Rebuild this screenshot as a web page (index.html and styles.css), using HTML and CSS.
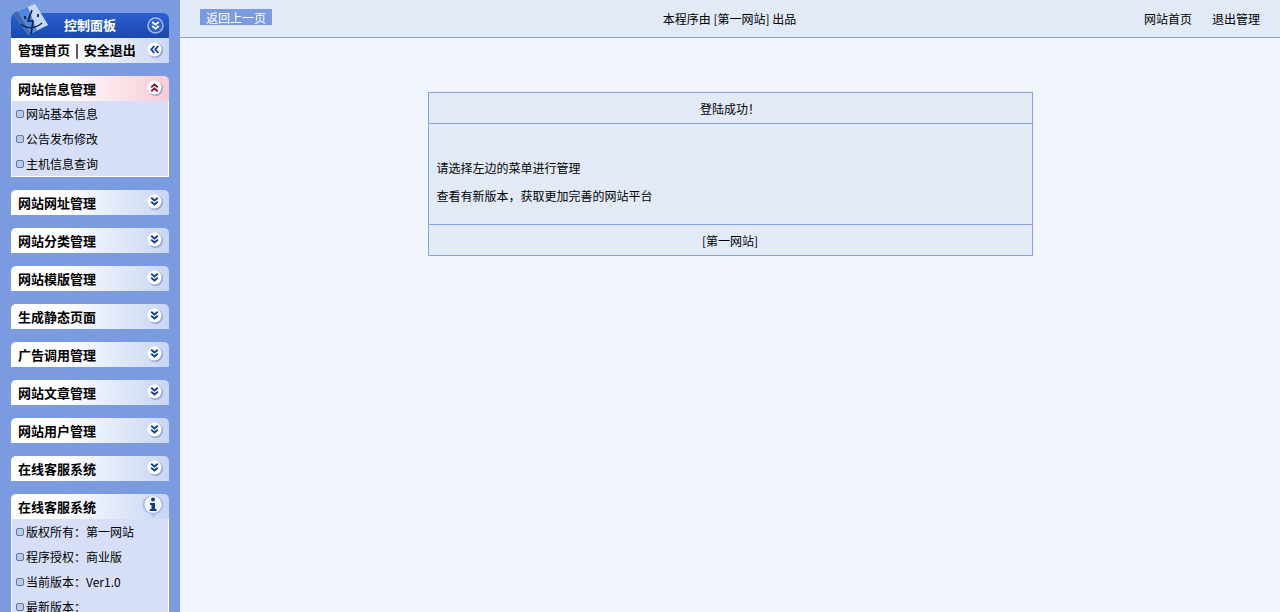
FILE: index.html
```html
<!DOCTYPE html>
<html lang="zh-CN">
<head>
<meta charset="utf-8">
<title>管理中心</title>
<link rel="stylesheet" href="styles.css">
</head>
<body>
<svg class="defs" width="0" height="0" aria-hidden="true">
  <defs>
    <g id="btn"><circle cx="9.500" cy="9.500" r="7.500" fill="#7f95cc" opacity=".75"/><circle cx="8.500" cy="8.500" r="7" fill="#fff"/></g>
    <g id="down"><use href="#btn"/><path d="M5.200 4.800 8.500 7.500 11.800 4.800M5.200 8.800 8.500 11.500 11.800 8.800" fill="none" stroke="#123f92" stroke-width="1.900"/></g>
  </defs>
</svg>
<div class="app">
  <aside class="side">
    <div class="title">
      <svg class="logo" width="38" height="36" viewBox="0 0 38 36" aria-hidden="true">
        <path d="M2 11 24 2 37 23 17 33Z" fill="#a9c2ee"/>
        <path d="M2 11 7 9 20 32 17 33Z" fill="#3f68b4"/>
        <path d="M7 9 17 5 26 28 20 32Z" fill="#4f86dc"/>
        <path d="M17 5 24 2 37 23 26 28Z" fill="#c6d8f6"/>
        <path d="M21 8 17 19H22L20 32" fill="none" stroke="#10204a" stroke-width="1.600"/>
        <path d="M14 14V17M27 12V15" fill="none" stroke="#10204a" stroke-width="1.800"/>
        <path d="M10 22C15 27 24 27 31 21" fill="none" stroke="#10204a" stroke-width="1.200"/>
      </svg>
      <span class="title-text">控制面板</span>
      <svg class="ico" width="19" height="19" viewBox="0 0 19 19" aria-hidden="true"><circle cx="9.500" cy="9.500" r="7.500" fill="#2f62cc" stroke="#a3bbec" stroke-width="1.500"/><path d="M6.200 6 9.500 8.700 12.800 6M6.200 10 9.500 12.700 12.800 10" fill="none" stroke="#fff" stroke-width="1.800"/></svg>
    </div>
    <div class="quick">
      <span class="quick-text">管理首页 | 安全退出</span>
      <svg class="ico" width="19" height="19" viewBox="0 0 19 19" aria-hidden="true"><use href="#btn"/><path d="M8.300 5 5.300 8.500 8.300 12M12.300 5 9.300 8.500 12.300 12" fill="none" stroke="#123f92" stroke-width="1.900"/></svg>
    </div>

    <section class="group">
      <div class="head head-open"><span>网站信息管理</span>
        <svg class="ico" width="19" height="19" viewBox="0 0 19 19" aria-hidden="true"><use href="#btn"/><path d="M5.200 8.200 8.500 5.500 11.800 8.200M5.200 12.200 8.500 9.500 11.800 12.200" fill="none" stroke="#8a1040" stroke-width="1.900"/></svg>
      </div>
      <ul class="list">
        <li>网站基本信息</li>
        <li>公告发布修改</li>
        <li>主机信息查询</li>
      </ul>
    </section>

    <section class="group"><div class="head"><span>网站网址管理</span><svg class="ico" width="19" height="19" viewBox="0 0 19 19" aria-hidden="true"><use href="#down"/></svg></div></section>
    <section class="group"><div class="head"><span>网站分类管理</span><svg class="ico" width="19" height="19" viewBox="0 0 19 19" aria-hidden="true"><use href="#down"/></svg></div></section>
    <section class="group"><div class="head"><span>网站模版管理</span><svg class="ico" width="19" height="19" viewBox="0 0 19 19" aria-hidden="true"><use href="#down"/></svg></div></section>
    <section class="group"><div class="head"><span>生成静态页面</span><svg class="ico" width="19" height="19" viewBox="0 0 19 19" aria-hidden="true"><use href="#down"/></svg></div></section>
    <section class="group"><div class="head"><span>广告调用管理</span><svg class="ico" width="19" height="19" viewBox="0 0 19 19" aria-hidden="true"><use href="#down"/></svg></div></section>
    <section class="group"><div class="head"><span>网站文章管理</span><svg class="ico" width="19" height="19" viewBox="0 0 19 19" aria-hidden="true"><use href="#down"/></svg></div></section>
    <section class="group"><div class="head"><span>网站用户管理</span><svg class="ico" width="19" height="19" viewBox="0 0 19 19" aria-hidden="true"><use href="#down"/></svg></div></section>
    <section class="group"><div class="head"><span>在线客服系统</span><svg class="ico" width="19" height="19" viewBox="0 0 19 19" aria-hidden="true"><use href="#down"/></svg></div></section>

    <section class="group">
      <div class="head"><span>在线客服系统</span>
        <svg class="info" width="24" height="25" viewBox="0 0 24 25" aria-hidden="true">
          <path d="M12 1.500C18 1.500 22.500 5 22.500 11 22.500 16 18 19 15 20L12.500 24 10 20C6 19 1.500 16 1.500 11 1.500 5 6 1.500 12 1.500Z" fill="#a9bfe8"/>
          <circle cx="12" cy="10.500" r="8.500" fill="#f2f6fd"/>
          <circle cx="12" cy="5.500" r="2" fill="#123a88"/>
          <path d="M9 9H14V15H15.500V17H8.800V15H10.500V11H9Z" fill="#123a88"/>
        </svg>
      </div>
      <ul class="list">
        <li>版权所有：第一网站</li>
        <li>程序授权：商业版</li>
        <li>当前版本：Ver1.0</li>
        <li>最新版本：</li>
      </ul>
    </section>
  </aside>

  <main class="main">
    <header class="top">
      <a class="back">返回上一页</a>
      <div class="credit">本程序由 [第一网站] 出品</div>
      <nav class="links"><a>网站首页</a><a>退出管理</a></nav>
    </header>
    <div class="box">
      <div class="box-head">登陆成功！</div>
      <div class="box-body">
        <p>请选择左边的菜单进行管理</p>
        <p>查看有新版本，获取更加完善的网站平台</p>
      </div>
      <div class="box-foot">[第一网站]</div>
    </div>
  </main>
</div>
</body>
</html>
```
FILE: styles.css
```css
* { box-sizing: border-box; }
html, body { height: 100%; margin: 0; overflow: hidden; }
body {
  font-family: "Noto Sans CJK SC", "Liberation Sans", sans-serif;
  font-size: 12px;
  line-height: 16px;
  color: #000;
  background: #f0f4fd;
}
.defs { display: block; height: 0; }
.app { display: flex; height: 100%; }

.side {
  width: 180px;
  flex: none;
  height: 100%;
  overflow: hidden;
  background: #7a9be0;
  padding: 13px 11px 0;
}
.title {
  position: relative;
  height: 25px;
  display: flex;
  align-items: center;
  padding-right: 4px;
  border-radius: 6px 6px 0 0;
  background: linear-gradient(#2b5fd0, #1a48ae);
}
.logo { position: absolute; left: 0; top: -11px; }
.title-text { margin: -2px 0 0 53px; flex: 1; color: #fff; font-weight: 700; font-size: 13px; }
.ico { flex: none; }
.quick {
  height: 25px;
  display: flex;
  align-items: center;
  padding: 0 4px 0 7px;
  background: linear-gradient(90deg, #fff 35%, #cad6f4);
}
.quick-text { flex: 1; margin-top: -2px; font-weight: 700; font-size: 13px; white-space: nowrap; word-spacing: 2px; }

.group { margin-top: 13px; }
.head {
  height: 25px;
  display: flex;
  align-items: center;
  justify-content: space-between;
  padding: 0 4px 0 7px;
  border-radius: 5px 5px 0 0;
  font-weight: 700;
  font-size: 13px;
  background: linear-gradient(90deg, #fff 30%, #c8d5f4);
}
.head-open { background: linear-gradient(90deg, #fff 30%, #f8ccd6); }
.info { flex: none; }
.list {
  list-style: none;
  margin: 0;
  padding: 0;
  background: #d6dff7;
  border: 1px solid #fff;
  border-top: 0;
}
.list li {
  position: relative;
  height: 25px;
  line-height: 25px;
  padding-left: 14px;
  color: #000;
}
.list li::before {
  content: "";
  position: absolute;
  left: 4px;
  top: 9px;
  width: 6px;
  height: 6px;
  border-radius: 2px;
  border: 1px solid #5f789f;
  background: #b9c9ec;
}

.main { flex: 1; min-width: 0; }
.top {
  height: 38px;
  display: flex;
  align-items: center;
  padding: 0 20px;
  background: #e2eaf8;
  border-bottom: 1px solid #88a3d6;
  position: relative;
}
.back {
  width: 72px;
  height: 16px;
  margin-top: -3px;
  padding-left: 6px;
  background: #7a9be0;
  color: #fff;
  line-height: 18px;
}
.credit { position: absolute; left: 0; right: 0; text-align: center; padding-right: 1px; }
.links { margin-left: auto; display: flex; gap: 20px; position: relative; }

.box {
  width: 605px;
  margin: 54px auto 0;
  background: #e2eaf8;
  border: 1px solid #88a3d6;
}
.box-head { height: 31px; line-height: 31px; text-align: center; border-bottom: 1px solid #88a3d6; }
.box-body { height: 101px; padding: 36px 7px 0 7px; border-bottom: 1px solid #88a3d6; }
.box-body p { margin: 0 0 12px; height: 16px; text-indent: 1px; }
.box-foot { height: 30px; line-height: 32px; text-align: center; }
```
